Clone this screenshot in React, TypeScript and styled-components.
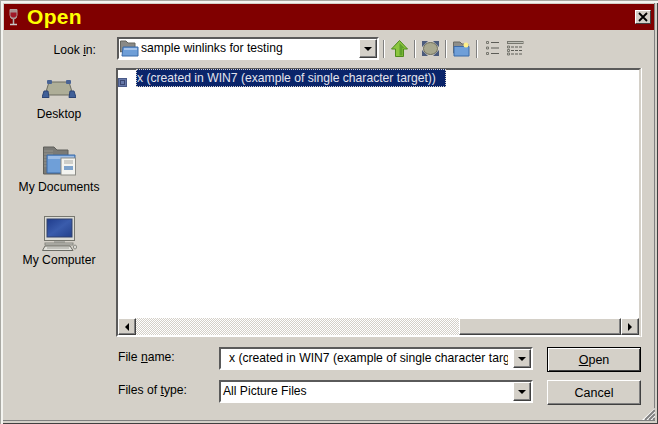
import styled, { createGlobalStyle } from "styled-components";

const GlobalStyle = createGlobalStyle`
  html, body {
    margin: 0;
    padding: 0;
    background: #d4d0c8;
  }
`;

const Window = styled.div`
  position: relative;
  box-sizing: border-box;
  width: 658px;
  height: 424px;
  padding: 4px;
  display: flex;
  flex-direction: column;
  background: #d4d0c8;
  box-shadow:
    inset 1px 1px 0 #a8a8a2,
    inset 3px 3px 0 #f4f4f0,
    inset -1px -1px 0 #404040,
    inset -3px -3px 0 #d4d0c8,
    inset -4px -4px 0 #808080;
  font-family: "Liberation Sans", Arial, sans-serif;
  font-size: 12.15px;
  color: #000;
`;

const TitleBar = styled.div`
  height: 26px;
  flex: none;
  display: flex;
  align-items: center;
  padding: 0 3px 0 5px;
  background: #800000;
`;

const TitleText = styled.div`
  margin-left: 9px;
  font-size: 21px;
  font-weight: 700;
  letter-spacing: 0.3px;
  color: #ffff00;
  flex: 1;
`;

const CloseButton = styled.div`
  box-sizing: border-box;
  width: 16px;
  height: 14px;
  display: flex;
  align-items: center;
  justify-content: center;
  background: #d4d0c8;
  border: 1px solid;
  border-color: #ffffff #404040 #404040 #ffffff;
`;

const Body = styled.div`
  flex: 1;
  display: flex;
  min-height: 0;
`;

const Sidebar = styled.div`
  width: 112px;
  flex: none;
  display: flex;
  flex-direction: column;
`;

const LookInLabel = styled.div`
  height: 14px;
  margin: 13px 20px 0 0;
  text-align: right;
  line-height: 14px;
`;

const Places = styled.div`
  display: flex;
  flex-direction: column;
  margin-top: 3px;
  gap: 12px;
`;

const Place = styled.div<{ $gap: number }>`
  height: 61px;
  display: flex;
  flex-direction: column;
  align-items: center;
  justify-content: flex-end;
  gap: ${(p) => p.$gap}px;
  padding-right: 2px;
  line-height: 14px;
`;

const Main = styled.div`
  flex: 1;
  display: flex;
  flex-direction: column;
  min-width: 0;
  padding-right: 13px;
`;

const TopRow = styled.div`
  height: 23px;
  margin-top: 7px;
  margin-left: 1px;
  display: flex;
  align-items: center;
  flex: none;
`;

const Sunken = styled.div`
  box-sizing: border-box;
  display: flex;
  align-items: center;
  background: #ffffff;
  border: 2px solid;
  border-color: #5a5a5a #ffffff #ffffff #5a5a5a;
`;

const LookInCombo = styled(Sunken)`
  width: 262px;
  height: 23px;
  padding-left: 1px;
`;

const ComboText = styled.div`
  flex: 1;
  min-width: 0;
  white-space: nowrap;
  overflow: hidden;
  line-height: 17px;
`;

const DropButton = styled.div`
  box-sizing: border-box;
  width: 18px;
  height: 19px;
  flex: none;
  display: flex;
  align-items: center;
  justify-content: center;
  background: #d4d0c8;
  border: 1px solid;
  border-color: #ffffff #404040 #404040 #ffffff;
  box-shadow: inset -1px -1px 0 #808080;
`;

const DownArrow = styled.div`
  width: 0;
  height: 0;
  border-left: 4px solid transparent;
  border-right: 4px solid transparent;
  border-top: 4px solid #000;
`;

const Separator = styled.div`
  width: 1px;
  height: 18px;
  flex: none;
  background: #808080;
  box-shadow: 1px 0 0 #ffffff;
`;

const FirstSeparator = styled(Separator)`
  margin-left: 4px;
`;

const ToolSlot = styled.div`
  width: 30px;
  height: 18px;
  flex: none;
  display: flex;
  align-items: center;
  justify-content: center;
`;

const ViewButtons = styled.div`
  display: flex;
  align-items: center;
  gap: 8px;
  margin-left: 9px;
`;

const Drawing = styled.svg`
  flex: none;
  display: block;
`;

const ComboFolder = styled(Drawing)`
  margin-right: 2px;
`;

const FileList = styled.div`
  box-sizing: border-box;
  flex: none;
  height: 269px;
  margin-top: 8px;
  display: flex;
  flex-direction: column;
  background: #ffffff;
  border: 2px solid;
  border-color: #5a5a5a #d4d0c8 #ffffff #5a5a5a;
  box-shadow: 1px 0 0 #ffffff;
`;

const ListArea = styled.div`
  flex: 1;
  min-height: 0;
  display: flex;
  align-items: flex-start;
`;

const FileIcon = styled.div`
  box-sizing: border-box;
  width: 9px;
  height: 9px;
  margin-top: 8px;
  flex: none;
  display: flex;
  align-items: center;
  justify-content: center;
  background: #6678a8;
  border: 1px solid #4a5a88;
`;

const FileIconMark = styled.div`
  width: 3px;
  height: 3px;
  border: 1px solid #3a4670;
`;

const SelectedRow = styled.div`
  box-sizing: border-box;
  height: 18px;
  margin: -1px 0 0 9px;
  padding: 0 9px 0 0;
  line-height: 16px;
  background: #0a246a;
  color: #e4e4ee;
  border: 1px dotted #d4d0c8;
  white-space: nowrap;
`;

const ScrollBar = styled.div`
  height: 17px;
  flex: none;
  display: flex;
`;

const ScrollButton = styled.div`
  box-sizing: border-box;
  width: 18px;
  height: 17px;
  flex: none;
  display: flex;
  align-items: center;
  justify-content: center;
  background: #d4d0c8;
  border: 1px solid;
  border-color: #ffffff #404040 #404040 #ffffff;
  box-shadow: inset -1px -1px 0 #808080;
`;

const ScrollArrow = styled.div<{ $dir: "left" | "right" }>`
  width: 0;
  height: 0;
  border-top: 4px solid transparent;
  border-bottom: 4px solid transparent;
  ${(p) =>
    p.$dir === "left"
      ? "border-right: 4px solid #000;"
      : "border-left: 4px solid #000;"}
`;

const ScrollTrack = styled.div`
  width: 323px;
  flex: none;
  background: repeating-conic-gradient(#d4d0c8 0 25%, #ffffff 0 50%) 0 0 / 2px 2px;
`;

const ScrollThumb = styled.div`
  box-sizing: border-box;
  flex: 1;
  background: #d4d0c8;
  border: 1px solid;
  border-color: #ffffff #404040 #404040 #ffffff;
  box-shadow: inset -1px -1px 0 #808080;
`;

const Form = styled.div`
  display: grid;
  grid-template-columns: 101px 328px 94px;
  row-gap: 8px;
  margin-top: 10px;
  margin-left: 2px;
`;

const FormLabel = styled.div`
  height: 24px;
  line-height: 21px;
  white-space: nowrap;
`;

const Field = styled(Sunken)`
  width: 314px;
  height: 23px;
`;

const FieldText = styled.div<{ $indent: number }>`
  flex: 1;
  min-width: 0;
  overflow: hidden;
  white-space: nowrap;
  margin-right: 5px;
  padding-left: ${(p) => p.$indent}px;
  line-height: 17px;
`;

const ActionButton = styled.div<{ $default?: boolean }>`
  box-sizing: border-box;
  width: 94px;
  height: 25px;
  display: flex;
  align-items: center;
  justify-content: center;
  font-size: 12.5px;
  background: #d4d0c8;
  border: 1px solid;
  border-color: ${(p) =>
    p.$default ? "#000000" : "#ffffff #404040 #404040 #ffffff"};
  box-shadow: ${(p) =>
    p.$default
      ? "inset 1px 1px 0 #ffffff, inset -1px -1px 0 #404040"
      : "inset -1px -1px 0 #808080"};
`;

const Grip = styled.svg`
  position: absolute;
  right: 3px;
  bottom: 4px;
`;

const Key = styled.span`
  text-decoration: underline;
`;

const WineIcon = () => (
  <Drawing width="9" height="17" viewBox="0 0 9 17">
    <path d="M1 0.5 L8 0.5 L8 6 Q8 10 4.5 10 Q1 10 1 6 Z" fill="#a89090" stroke="#b0a0a0" />
    <path d="M1.5 3.5 L7.5 3.5 L7.5 7 Q4.5 10 1.5 7 Z" fill="#a01828" />
    <path d="M4.5 10 V15" stroke="#b0b0b0" strokeWidth="1.5" />
    <path d="M1 15.5 H8" stroke="#c8c8c8" strokeWidth="1.5" />
  </Drawing>
);

const ComboFolderIcon = () => (
  <ComboFolder width="19" height="17" viewBox="0 0 19 17">
    <path d="M0.5 1 L6 1 L8 3 L15 3 L15 8 L0.5 12 Z" fill="#8a8a86" stroke="#66665f" />
    <path d="M3 7 L18 7 L18 16 L2 16 Z" fill="#6f9fd8" stroke="#3b6aa8" />
    <rect x="4" y="8" width="13" height="2" fill="#a6c4ea" />
  </ComboFolder>
);

const DesktopIcon = () => (
  <Drawing width="34" height="18" viewBox="0 0 34 18">
    <path d="M7 2 L27 2 L31 15 L3 15 Z" fill="#aeae98" stroke="#6c6c60" />
    <rect x="5" y="0" width="5" height="4" rx="1" fill="#4a6494" />
    <rect x="24" y="0" width="5" height="4" rx="1" fill="#4a6494" />
    <path d="M0 17.5 L2 11 L6 11 L7 17.5 Z" fill="#3f5f98" stroke="#2c4474" />
    <path d="M27 17.5 L28 11 L32 11 L34 17.5 Z" fill="#3f5f98" stroke="#2c4474" />
  </Drawing>
);

const DocumentsIcon = () => (
  <Drawing width="33" height="30" viewBox="0 0 33 30">
    <path d="M0.5 1 L11 1 L14 4 L25 4 L25 28 L0.5 28 Z" fill="#7a7a76" stroke="#5f5f5a" />
    <path d="M1 5 H10 M1 8 H10 M1 11 H10 M1 14 H10 M1 17 H10 M1 20 H10" stroke="#93938d" />
    <path d="M4 9 L32 9 L32 27 L4 27 Z" fill="#6f9fd8" stroke="#3b6aa8" />
    <rect x="5" y="10" width="26" height="3" fill="#9dbde6" />
    <rect x="18" y="12" width="14.5" height="17" fill="#f4f4f0" stroke="#8c8c86" />
    <path d="M21 15 H30 M21 17 H30" stroke="#a8a8a2" />
    <rect x="21" y="20" width="9" height="4" fill="#7ea3cc" />
  </Drawing>
);

const ComputerIcon = () => (
  <Drawing width="35" height="35" viewBox="0 0 35 35">
    <defs>
      <linearGradient id="screen" x1="0" y1="0" x2="1" y2="1">
        <stop offset="0" stopColor="#1f3c8c" />
        <stop offset="0.5" stopColor="#3a5cac" />
        <stop offset="1" stopColor="#24418c" />
      </linearGradient>
    </defs>
    <rect x="2.5" y="0.5" width="30" height="24" fill="#dcdcd6" stroke="#77776f" />
    <rect x="5" y="3" width="25" height="18" fill="url(#screen)" stroke="#30406c" />
    <rect x="12" y="25" width="11" height="2" fill="#a8a8a2" />
    <rect x="3" y="27" width="28" height="2" fill="#c8c8c2" stroke="#85857e" />
    <path d="M3 30 L28 30 L31 34.5 L0.5 34.5 Z" fill="#e2e2dc" stroke="#6c6c65" />
    <path d="M5 32 H27" stroke="#a2a29c" />
    <ellipse cx="33" cy="31" rx="1.6" ry="2" fill="#dcdcd6" stroke="#8c8c86" />
  </Drawing>
);

const UpArrowIcon = () => (
  <Drawing width="17" height="17" viewBox="0 0 17 17">
    <path d="M8.5 0.5 L16.5 9 L12.5 9 L12.5 16.5 L4.5 16.5 L4.5 9 L0.5 9 Z" fill="#8cc63f" stroke="#4e8a1c" />
    <path d="M8.5 3 L8.5 15.5 L11.5 15.5 L11.5 8 L13.5 8 Z" fill="#5fa02c" />
  </Drawing>
);

const DesktopToolIcon = () => (
  <Drawing width="17" height="15" viewBox="0 0 17 15">
    <ellipse cx="8.5" cy="7.5" rx="7" ry="6" fill="#a8a88e" stroke="#6e6e5c" />
    <path d="M0 0 H6 L0 6 Z M17 0 H11 L17 6 Z M0 15 H6 L0 9 Z M17 15 H11 L17 9 Z" fill="#4c5c7c" />
  </Drawing>
);

const NewFolderIcon = () => (
  <Drawing width="17" height="16" viewBox="0 0 17 16">
    <path d="M0.5 1 L7 1 L9 3 L15 3 L15 8 L0.5 12 Z" fill="#8e8e8a" stroke="#6a6a64" />
    <path d="M1 5.5 L16 5.5 L16 15 L1 15 Z" fill="#6f9fd8" stroke="#3b6aa8" />
    <circle cx="13" cy="4" r="2.5" fill="#fff08a" />
  </Drawing>
);

const ListViewIcon = () => (
  <Drawing width="13" height="15" viewBox="0 0 13 15">
    <path d="M0.5 0.5 h2 v2 h-2 Z M0.5 6 h2 v2 h-2 Z M0.5 11.5 h2 v2 h-2 Z" fill="none" stroke="#77776f" />
    <path d="M5 1.5 H13 M5 7 H13 M5 12.5 H13" stroke="#5c5c56" />
  </Drawing>
);

const DetailViewIcon = () => (
  <Drawing width="17" height="15" viewBox="0 0 17 15">
    <rect x="0.5" y="0.5" width="15.5" height="2" fill="#c0c0b8" stroke="#77776f" />
    <path d="M0.5 5 h2 v2 h-2 Z M0.5 8.5 h2 v2 h-2 Z M0.5 12 h2 v2 h-2 Z" fill="none" stroke="#77776f" />
    <path d="M4 6 H16 M4 9.5 H16 M4 13 H16" stroke="#5c5c56" strokeDasharray="3 1" />
  </Drawing>
);

const App = () => {
  return (
    <>
      <GlobalStyle />
      <Window>
        <TitleBar>
          <WineIcon />
          <TitleText>Open</TitleText>
          <CloseButton>
            <svg width="10" height="10" viewBox="0 0 10 10">
              <path d="M1 1 L9 9 M9 1 L1 9" stroke="#000" strokeWidth="1.8" />
            </svg>
          </CloseButton>
        </TitleBar>
        <Body>
          <Sidebar>
            <LookInLabel>
              Look <Key>i</Key>n:
            </LookInLabel>
            <Places>
              <Place $gap={9}>
                <DesktopIcon />
                <span>Desktop</span>
              </Place>
              <Place $gap={4}>
                <DocumentsIcon />
                <span>My Documents</span>
              </Place>
              <Place $gap={2}>
                <ComputerIcon />
                <span>My Computer</span>
              </Place>
            </Places>
          </Sidebar>
          <Main>
            <TopRow>
              <LookInCombo>
                <ComboFolderIcon />
                <ComboText>sample winlinks for testing</ComboText>
                <DropButton>
                  <DownArrow />
                </DropButton>
              </LookInCombo>
              <FirstSeparator />
              <ToolSlot>
                <UpArrowIcon />
              </ToolSlot>
              <Separator />
              <ToolSlot>
                <DesktopToolIcon />
              </ToolSlot>
              <Separator />
              <ToolSlot>
                <NewFolderIcon />
              </ToolSlot>
              <Separator />
              <ViewButtons>
                <ListViewIcon />
                <DetailViewIcon />
              </ViewButtons>
            </TopRow>
            <FileList>
              <ListArea>
                <FileIcon>
                  <FileIconMark />
                </FileIcon>
                <SelectedRow>x (created in WIN7 (example of single character target))</SelectedRow>
              </ListArea>
              <ScrollBar>
                <ScrollButton>
                  <ScrollArrow $dir="left" />
                </ScrollButton>
                <ScrollTrack />
                <ScrollThumb />
                <ScrollButton>
                  <ScrollArrow $dir="right" />
                </ScrollButton>
              </ScrollBar>
            </FileList>
            <Form>
              <FormLabel>
                File <Key>n</Key>ame:
              </FormLabel>
              <Field>
                <FieldText $indent={8}>x (created in WIN7 (example of single character target))</FieldText>
                <DropButton>
                  <DownArrow />
                </DropButton>
              </Field>
              <ActionButton $default>
                <span>
                  <Key>O</Key>pen
                </span>
              </ActionButton>
              <FormLabel>
                Files of <Key>t</Key>ype:
              </FormLabel>
              <Field>
                <FieldText $indent={2}>All Picture Files</FieldText>
                <DropButton>
                  <DownArrow />
                </DropButton>
              </Field>
              <ActionButton>Cancel</ActionButton>
            </Form>
          </Main>
        </Body>
        <Grip width="13" height="12" viewBox="0 0 13 12">
          <path d="M13 0 L13 12 L0 12 Z" fill="#ffffff" />
          <path d="M13 2 L3 12 M13 6 L7 12 M13 10 L11 12" stroke="#808080" strokeWidth="2" />
        </Grip>
      </Window>
    </>
  );
};

export default App;
